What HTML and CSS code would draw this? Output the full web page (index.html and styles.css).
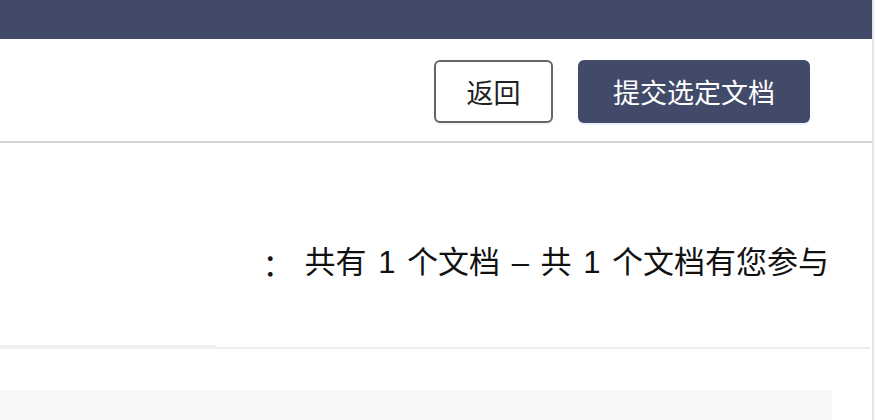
FILE: index.html
```html
<!DOCTYPE html>
<html lang="zh-CN">
<head>
<meta charset="utf-8">
<title>提交选定文档</title>
<link rel="stylesheet" href="styles.css">
</head>
<body>
<div class="frame">
  <div class="page">
    <div class="topbar"></div>
    <div class="toolbar">
      <button class="btn btn-back">返回</button>
      <button class="btn btn-submit">提交选定文档</button>
    </div>
    <div class="summary">
      <span class="label">：</span>
      <span class="count">共有 1 个文档 – 共 1 个文档有您参与</span>
    </div>
    <div class="tabline"><div class="tab-active"></div></div>
    <div class="spacer"></div>
    <div class="listbox"></div>
  </div>
</div>
</body>
</html>
```
FILE: styles.css
```css
html, body {
  margin: 0;
  padding: 0;
  background: #ffffff;
  overflow: hidden;
}
body {
  font-family: "Noto Sans CJK SC", "Noto Sans", sans-serif;
  width: 876px;
  height: 420px;
}
.frame {
  width: 876px;
  height: 420px;
  display: flex;
}
.page {
  width: 872px;
  border-right: 2px solid #e6e6e6;
  height: 420px;
  display: flex;
  flex-direction: column;
}
.topbar {
  height: 39px;
  background: #424a69;
  flex: none;
}
.toolbar {
  height: 104px;
  flex: none;
  display: flex;
  justify-content: flex-end;
  align-items: flex-start;
  gap: 25px;
  padding: 21px 62px 0 0;
  box-sizing: border-box;
  border-bottom: 2px solid #d4d4d8;
}
.btn {
  height: 63px;
  font-family: "Noto Sans CJK SC", sans-serif;
  font-size: 27px;
  line-height: 1;
  border-radius: 6px;
  box-sizing: border-box;
  padding: 0;
  cursor: pointer;
}
.btn-back {
  width: 119px;
  background: #ffffff;
  color: #222222;
  border: 2px solid #666666;
  box-shadow: 0 2px 0 #f4f4f6;
}
.btn-submit {
  width: 232px;
  background: #424a69;
  color: #ffffff;
  border: none;
  box-shadow: 0 2px 0 #e8f1ff;
}
.summary {
  height: 204px;
  flex: none;
  display: flex;
  justify-content: flex-end;
  align-items: flex-start;
  padding: 100px 43px 0 0;
  box-sizing: border-box;
  font-family: "Liberation Sans", "Noto Sans CJK SC", sans-serif;
  font-size: 31px;
  line-height: 40px;
  word-spacing: 3px;
  color: #111111;
}
.label {
  font-family: "Noto Sans CJK SC", sans-serif;
  margin-right: 11px;
}
.tabline {
  height: 2px;
  background: #ededed;
  flex: none;
  margin-right: 2px;
  position: relative;
}
.tab-active {
  position: absolute;
  left: 0;
  top: -2px;
  width: 216px;
  height: 4px;
  background: #efefef;
}
.spacer {
  height: 41px;
  flex: none;
}
.listbox {
  width: 832px;
  height: 40px;
  background: #f8f7f6;
  flex: none;
}
```
